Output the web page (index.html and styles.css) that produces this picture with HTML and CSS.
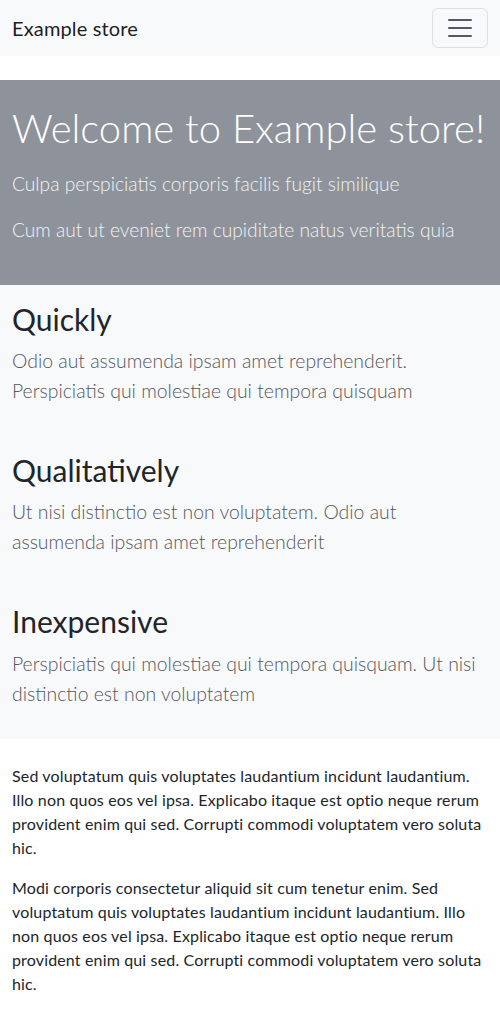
FILE: index.html
```html
<!DOCTYPE html>
<html lang="en">
<head>
<meta charset="utf-8">
<title>Example store</title>
<link rel="stylesheet" href="styles.css">
</head>
<body>
<nav class="navbar">
  <span class="brand">Example store</span>
  <button class="toggler" aria-label="Toggle navigation">
    <svg class="toggler-icon" viewBox="0 0 30 30" width="30" height="30">
      <path d="M4 7h22M4 15h22M4 23h22" stroke="rgba(33,37,41,0.75)" stroke-width="2" stroke-linecap="round" fill="none"/>
    </svg>
  </button>
</nav>
<main>
  <section class="hero">
    <h1 class="hero-title">Welcome to Example store!</h1>
    <p class="lead hero-lead">Culpa perspiciatis corporis facilis fugit similique</p>
    <p class="lead hero-lead">Cum aut ut eveniet rem cupiditate natus veritatis quia</p>
  </section>
  <section class="features">
    <div class="feature">
      <h2 class="feature-title">Quickly</h2>
      <p class="lead feature-text">Odio aut assumenda ipsam amet reprehenderit. Perspiciatis qui molestiae qui tempora quisquam</p>
    </div>
    <div class="feature">
      <h2 class="feature-title">Qualitatively</h2>
      <p class="lead feature-text">Ut nisi distinctio est non voluptatem. Odio aut assumenda ipsam amet reprehenderit</p>
    </div>
    <div class="feature">
      <h2 class="feature-title">Inexpensive</h2>
      <p class="lead feature-text">Perspiciatis qui molestiae qui tempora quisquam. Ut nisi distinctio est non voluptatem</p>
    </div>
  </section>
  <section class="about">
    <p class="text">Sed voluptatum quis voluptates laudantium incidunt laudantium. Illo non quos eos vel ipsa. Explicabo itaque est optio neque rerum provident enim qui sed. Corrupti commodi voluptatem vero soluta hic.</p>
    <p class="text">Modi corporis consectetur aliquid sit cum tenetur enim. Sed voluptatum quis voluptates laudantium incidunt laudantium. Illo non quos eos vel ipsa. Explicabo itaque est optio neque rerum provident enim qui sed. Corrupti commodi voluptatem vero soluta hic.</p>
  </section>
</main>
</body>
</html>
```
FILE: styles.css
```css
* { box-sizing: border-box; }
html, body {
  margin: 0;
  padding: 0;
}
body {
  font-family: Lato, "Noto Sans", sans-serif;
  font-size: 16px;
  line-height: 1.5;
  color: #212529;
  background: #fff;
}
.navbar {
  height: 56px;
  background: #f8f9fa;
  display: flex;
  align-items: center;
  justify-content: space-between;
  padding: 0 12px;
}
.brand {
  font-size: 20px;
  line-height: 30px;
  letter-spacing: 0.15px;
  color: rgba(0,0,0,0.9);
}
.toggler {
  width: 56px;
  height: 40px;
  padding: 4px 12px;
  border: 1px solid rgba(0,0,0,0.1);
  border-radius: 6px;
  background: transparent;
  display: flex;
  align-items: center;
  justify-content: center;
}
.toggler-icon { display: block; }
main { margin-top: 24px; }
.hero {
  background: #8e939b;
  padding: 24px 12px 24px;
}
.hero-title {
  margin: 0 0 17px;
  font-size: 40px;
  font-weight: 300;
  line-height: 48px;
  color: #fff;
  white-space: nowrap;
}
.lead {
  font-size: 20px;
  font-weight: 300;
  line-height: 30px;
  margin: 0 0 16px;
}
.hero-lead {
  font-size: 19.2px;
  color: #f1f2f4;
}
.features {
  background: #f8f9fa;
  padding: 0 12px;
}
.feature { padding: 14.5px 0; }
.feature-title {
  margin: 0 0 8px;
  font-size: 30px;
  font-weight: 400;
  line-height: 38.4px;
  color: #212529;
}
.feature-text {
  font-size: 19.4px;
  color: #54575b;
}
.about { padding: 25px 12px 8px; }
.text {
  margin: 0 0 16px;
  letter-spacing: 0.15px;
}
```
